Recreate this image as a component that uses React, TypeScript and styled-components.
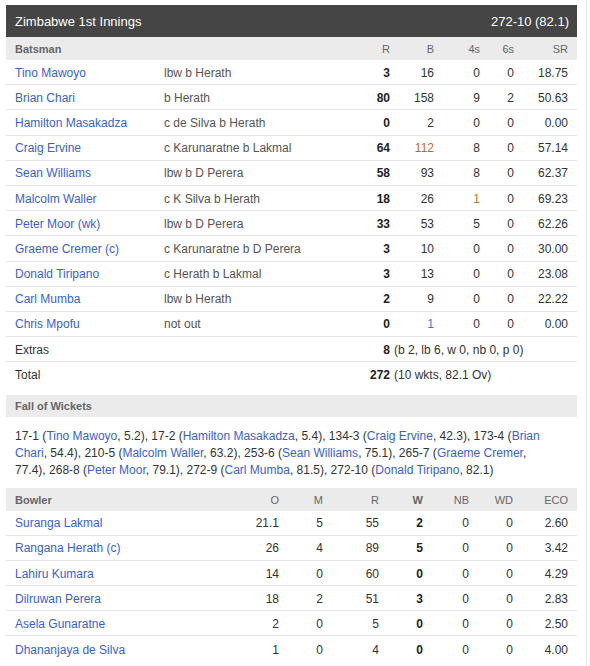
import { Fragment } from "react";
import styled, { createGlobalStyle } from "styled-components";

const GlobalStyle = createGlobalStyle`
  body {
    margin: 0;
    background: #ffffff;
    font-family: Arial, "Liberation Sans", sans-serif;
  }
`;

const BAT_COLS = "149px 186px 40px 44px 46px 34px 54px";
const BOWL_COLS = "214px 50px 44px 56px 44px 46px 44px 55px";

const Page = styled.div`
  width: 587px;
  height: 666px;
  box-sizing: border-box;
  padding: 5px 0 0 6px;
  border-right: 1px solid #e4e4e4;
  overflow: hidden;
`;

const Card = styled.div`
  width: 571px;
`;

const TitleBar = styled.div`
  height: 32px;
  background: #454545;
  color: #ffffff;
  font-size: 13px;
  display: flex;
  align-items: center;
  justify-content: space-between;
  padding: 0 8px 0 9px;
`;

const HeadRow = styled.div<{ $cols: string }>`
  display: grid;
  grid-template-columns: ${(p) => p.$cols};
  align-items: center;
  height: 23px;
  padding: 1px 9px 0;
  box-sizing: border-box;
  background: #ebebeb;
  color: #666666;
  font-size: 11px;
`;

const SectionHead = styled.div`
  height: 22px;
  display: flex;
  align-items: center;
  padding: 0 9px;
  margin-top: 8px;
  background: #ebebeb;
  color: #666666;
  font-size: 11px;
  font-weight: bold;
`;

const Row = styled.div<{ $cols: string; $last?: boolean }>`
  display: grid;
  grid-template-columns: ${(p) => p.$cols};
  align-items: center;
  height: ${(p) => (p.$last ? "24.2px" : "23.2px")};
  padding: 1px 9px 0;
  border-bottom: ${(p) => (p.$last ? "none" : "1px solid #e6e6e6")};
  font-size: 12px;
  color: #333333;
`;

const Cell = styled.div<{
  $right?: boolean;
  $bold?: boolean;
  $span?: number;
  $muted?: boolean;
}>`
  text-align: ${(p) => (p.$right ? "right" : "left")};
  font-weight: ${(p) => (p.$bold ? "bold" : "normal")};
  color: ${(p) => (p.$bold ? "#222222" : p.$muted ? "#555555" : "inherit")};
  grid-column: ${(p) => (p.$span ? `span ${p.$span}` : "auto")};
  white-space: nowrap;
`;

const HeadLabel = styled(Cell)`
  color: #666666;
`;

const Link = styled.span`
  color: #3b5fcd;
`;

const Tint = styled.span<{ $c: string }>`
  color: ${(p) => p.$c};
`;

const Detail = styled.span`
  padding-left: 4px;
  color: #333333;
`;

const FowText = styled.div`
  padding: 11px 22px 9px 9px;
  font-size: 12px;
  line-height: 16.7px;
  color: #333333;
`;

type Bat = {
  name: string;
  how: string;
  r: string;
  b: string;
  fours: string;
  sixes: string;
  sr: string;
  tint?: { col: "b" | "fours"; c: string };
};

const batting: Bat[] = [
  { name: "Tino Mawoyo", how: "lbw b Herath", r: "3", b: "16", fours: "0", sixes: "0", sr: "18.75" },
  { name: "Brian Chari", how: "b Herath", r: "80", b: "158", fours: "9", sixes: "2", sr: "50.63" },
  { name: "Hamilton Masakadza", how: "c de Silva b Herath", r: "0", b: "2", fours: "0", sixes: "0", sr: "0.00" },
  { name: "Craig Ervine", how: "c Karunaratne b Lakmal", r: "64", b: "112", fours: "8", sixes: "0", sr: "57.14", tint: { col: "b", c: "#b0701c" } },
  { name: "Sean Williams", how: "lbw b D Perera", r: "58", b: "93", fours: "8", sixes: "0", sr: "62.37" },
  { name: "Malcolm Waller", how: "c K Silva b Herath", r: "18", b: "26", fours: "1", sixes: "0", sr: "69.23", tint: { col: "fours", c: "#c0781e" } },
  { name: "Peter Moor (wk)", how: "lbw b D Perera", r: "33", b: "53", fours: "5", sixes: "0", sr: "62.26" },
  { name: "Graeme Cremer (c)", how: "c Karunaratne b D Perera", r: "3", b: "10", fours: "0", sixes: "0", sr: "30.00" },
  { name: "Donald Tiripano", how: "c Herath b Lakmal", r: "3", b: "13", fours: "0", sixes: "0", sr: "23.08" },
  { name: "Carl Mumba", how: "lbw b Herath", r: "2", b: "9", fours: "0", sixes: "0", sr: "22.22" },
  { name: "Chris Mpofu", how: "not out", r: "0", b: "1", fours: "0", sixes: "0", sr: "0.00", tint: { col: "b", c: "#3a78c8" } },
];

const bowling = [
  ["Suranga Lakmal", "21.1", "5", "55", "2", "0", "0", "2.60"],
  ["Rangana Herath (c)", "26", "4", "89", "5", "0", "0", "3.42"],
  ["Lahiru Kumara", "14", "0", "60", "0", "0", "0", "4.29"],
  ["Dilruwan Perera", "18", "2", "51", "3", "0", "0", "2.83"],
  ["Asela Gunaratne", "2", "0", "5", "0", "0", "0", "2.50"],
  ["Dhananjaya de Silva", "1", "0", "4", "0", "0", "0", "4.00"],
];

const fow: [string, string, string][] = [
  ["17-1", "Tino Mawoyo", "5.2"],
  ["17-2", "Hamilton Masakadza", "5.4"],
  ["134-3", "Craig Ervine", "42.3"],
  ["173-4", "Brian Chari", "54.4"],
  ["210-5", "Malcolm Waller", "63.2"],
  ["253-6", "Sean Williams", "75.1"],
  ["265-7", "Graeme Cremer", "77.4"],
  ["268-8", "Peter Moor", "79.1"],
  ["272-9", "Carl Mumba", "81.5"],
  ["272-10", "Donald Tiripano", "82.1"],
];

function tinted(value: string, bat: Bat, col: "b" | "fours") {
  if (bat.tint && bat.tint.col === col) return <Tint $c={bat.tint.c}>{value}</Tint>;
  return value;
}

function App() {
  return (
    <Page>
      <GlobalStyle />
      <Card>
        <TitleBar>
          <span>Zimbabwe 1st Innings</span>
          <span>272-10 (82.1)</span>
        </TitleBar>

        <HeadRow $cols={BAT_COLS}>
          <HeadLabel $bold>Batsman</HeadLabel>
          <Cell />
          <Cell $right>R</Cell>
          <Cell $right>B</Cell>
          <Cell $right>4s</Cell>
          <Cell $right>6s</Cell>
          <Cell $right>SR</Cell>
        </HeadRow>

        {batting.map((b) => (
          <Row key={b.name} $cols={BAT_COLS}>
            <Cell><Link>{b.name}</Link></Cell>
            <Cell $muted>{b.how}</Cell>
            <Cell $right $bold>{b.r}</Cell>
            <Cell $right>{tinted(b.b, b, "b")}</Cell>
            <Cell $right>{tinted(b.fours, b, "fours")}</Cell>
            <Cell $right>{b.sixes}</Cell>
            <Cell $right>{b.sr}</Cell>
          </Row>
        ))}

        <Row $cols={BAT_COLS}>
          <Cell $span={2}>Extras</Cell>
          <Cell $right $bold>8</Cell>
          <Cell $span={4}><Detail>(b 2, lb 6, w 0, nb 0, p 0)</Detail></Cell>
        </Row>
        <Row $cols={BAT_COLS} $last>
          <Cell $span={2}>Total</Cell>
          <Cell $right $bold>272</Cell>
          <Cell $span={4}><Detail>(10 wkts, 82.1 Ov)</Detail></Cell>
        </Row>

        <SectionHead>Fall of Wickets</SectionHead>
        <FowText>
          {fow.map(([score, name, over], i) => (
            <Fragment key={score}>
              {score} (<Link>{name}</Link>, {over}){i < fow.length - 1 ? ", " : ""}
            </Fragment>
          ))}
        </FowText>

        <HeadRow $cols={BOWL_COLS}>
          <HeadLabel $bold>Bowler</HeadLabel>
          <Cell $right>O</Cell>
          <Cell $right>M</Cell>
          <Cell $right>R</Cell>
          <HeadLabel $right $bold>W</HeadLabel>
          <Cell $right>NB</Cell>
          <Cell $right>WD</Cell>
          <Cell $right>ECO</Cell>
        </HeadRow>

        {bowling.map((r, i) => (
          <Row key={r[0]} $cols={BOWL_COLS} $last={i === bowling.length - 1}>
            <Cell><Link>{r[0]}</Link></Cell>
            <Cell $right>{r[1]}</Cell>
            <Cell $right>{r[2]}</Cell>
            <Cell $right>{r[3]}</Cell>
            <Cell $right $bold>{r[4]}</Cell>
            <Cell $right>{r[5]}</Cell>
            <Cell $right>{r[6]}</Cell>
            <Cell $right>{r[7]}</Cell>
          </Row>
        ))}
      </Card>
    </Page>
  );
}

export default App;
